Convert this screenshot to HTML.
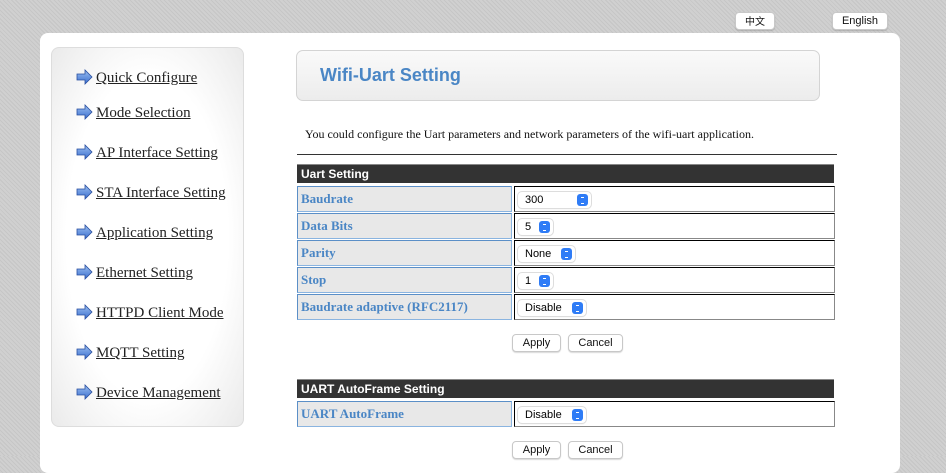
<!DOCTYPE html><html><head><style>
body{margin:0;width:946px;height:456px;overflow:hidden;background:#cbcbcb repeating-linear-gradient(45deg,#c6c6c6 0 1px,#d0d0d0 1px 3px);font-family:"Liberation Serif",serif;position:relative}
.a{position:absolute}
.btn{position:absolute;background:#fff;border:1px solid #c8c8c8;border-radius:4px;font:11px "Liberation Sans",sans-serif;text-align:center;line-height:16px;color:#111;box-shadow:0 1px 1px rgba(0,0,0,.15)}
.main{left:40px;top:33px;width:860px;height:440px;background:#fff;border-radius:8px}
.side{left:51px;top:47px;width:191px;height:378px;border-radius:8px;background:radial-gradient(ellipse at center,#fff 60%,#eaeaea 100%);border:1px solid #ddd}
.nav{position:absolute;left:76px;font-size:15px;color:#222;text-decoration:underline}
.hdr{position:absolute;left:297px;width:537px;height:19px;background:#333;color:#fff;font:bold 12px "Liberation Sans",sans-serif;line-height:19px;padding-left:4px;box-sizing:border-box;border-top:1px solid #888}
.lab{position:absolute;left:297px;width:215px;height:26px;background:#e8e8e8;border:1px solid #5b8fc7;border-right-color:#8ab4e0;border-bottom-color:#8ab4e0;box-sizing:border-box;color:#4a86c5;font-weight:bold;font-size:13px;line-height:24px;padding-left:3px}
.val{position:absolute;left:514px;width:321px;height:26px;border:1px solid #000;border-right-color:#888;border-bottom-color:#888;box-sizing:border-box}
.sel{position:absolute;left:3px;top:5px;height:16px;background:#fff;border-radius:4px;box-shadow:0 0 0 1px #ddd,0 1px 1px rgba(0,0,0,.15);font:11px "Liberation Sans",sans-serif;line-height:16px;padding-left:7px;box-sizing:border-box}
.sel i{position:absolute;right:3px;top:2px;width:11px;height:12px;background:#2f7cf6;border-radius:3px}
.sel i:after{content:"";position:absolute;left:4px;top:3px;width:3px;height:5px;border:1px solid #fff;border-width:1px 0;}
</style></head><body>
<div class="btn" style="left:735px;top:12px;width:38px;font-family:'Noto Sans CJK SC',sans-serif;font-size:10px">中文</div>
<div class="btn" style="left:832px;top:12px;width:54px">English</div>
<div class="a main"></div>
<div class="a side"></div>
<svg width="0" height="0" style="position:absolute"><defs><linearGradient id="g" x1="0" y1="0" x2="0" y2="1"><stop offset="0" stop-color="#9cc0f0"/><stop offset="1" stop-color="#3b6fd0"/></linearGradient></defs></svg>
<div class="nav" style="top:70px;left:96px">Quick Configure</div>
<div class="nav" style="top:105px;left:96px">Mode Selection</div>
<div class="nav" style="top:145px;left:96px">AP Interface Setting</div>
<div class="nav" style="top:185px;left:96px">STA Interface Setting</div>
<div class="nav" style="top:225px;left:96px">Application Setting</div>
<div class="nav" style="top:265px;left:96px">Ethernet Setting</div>
<div class="nav" style="top:305px;left:96px">HTTPD Client Mode</div>
<div class="nav" style="top:345px;left:96px">MQTT Setting</div>
<div class="nav" style="top:385px;left:96px">Device Management</div>
<svg class="a" style="left:76px;top:69px" width="17" height="340">
<g fill="url(#g)" stroke="#2a4fa0" stroke-width=".8">
<path id="p" d="M1 5h8V1l7 7-7 7v-4H1z"/>
<use href="#p" y="35"/><use href="#p" y="75"/><use href="#p" y="115"/><use href="#p" y="155"/><use href="#p" y="195"/><use href="#p" y="235"/><use href="#p" y="275"/><use href="#p" y="315"/></g></svg>
<div class="a" style="left:296px;top:50px;width:522px;height:49px;border:1px solid #d4d4d4;border-radius:7px;background:linear-gradient(#fafafa,#ececec)"></div>
<div class="a" style="left:320px;top:65px;font:bold 18px 'Liberation Sans',sans-serif;color:#4a86c5">Wifi-Uart Setting</div>
<div class="a" style="left:305px;top:127px;font-size:12px;color:#111">You could configure the Uart parameters and network parameters of the wifi-uart application.</div>
<div class="a" style="left:297px;top:154px;width:540px;height:1px;background:#333"></div>
<div class="hdr" style="top:164px">Uart Setting</div>
<div class="lab" style="top:186px">Baudrate</div><div class="val" style="top:186px"><div class="sel" style="width:73px">300<i></i></div></div>
<div class="lab" style="top:213px">Data Bits</div><div class="val" style="top:213px"><div class="sel" style="width:35px">5<i></i></div></div>
<div class="lab" style="top:240px">Parity</div><div class="val" style="top:240px"><div class="sel" style="width:57px">None<i></i></div></div>
<div class="lab" style="top:267px">Stop</div><div class="val" style="top:267px"><div class="sel" style="width:35px">1<i></i></div></div>
<div class="lab" style="top:294px">Baudrate adaptive (RFC2117)</div><div class="val" style="top:294px"><div class="sel" style="width:68px">Disable<i></i></div></div>
<div class="btn" style="left:512px;top:334px;width:47px">Apply</div>
<div class="btn" style="left:568px;top:334px;width:53px">Cancel</div>
<div class="hdr" style="top:379px">UART AutoFrame Setting</div>
<div class="lab" style="top:401px">UART AutoFrame</div><div class="val" style="top:401px"><div class="sel" style="width:68px">Disable<i></i></div></div>
<div class="btn" style="left:512px;top:441px;width:47px">Apply</div>
<div class="btn" style="left:568px;top:441px;width:53px">Cancel</div>
</body></html>
